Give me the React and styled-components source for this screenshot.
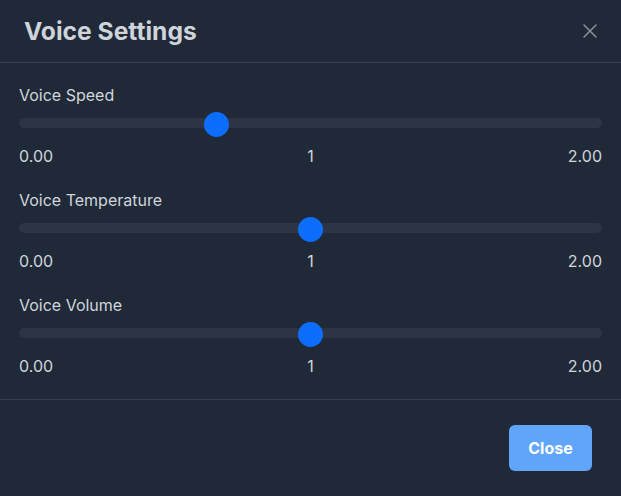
import React from 'react'
import styled, { createGlobalStyle } from 'styled-components'

const Global = createGlobalStyle`
    html, body {
        margin: 0;
        padding: 0;
        background: #1f2937;
    }
    body {
        font-family: Inter, "Noto Sans", sans-serif;
    }
`

const Modal = styled.div`
    width: 621px;
    height: 496px;
    background-color: #1f2937;
    color: #d1d5db;
    display: flex;
    flex-direction: column;
`

const Header = styled.div`
    height: 62px;
    display: flex;
    align-items: center;
    justify-content: space-between;
    padding: 0 24px 0 24px;
    border-bottom: 1px solid #364152;
`

const Title = styled.h2`
    margin: 0;
    font-size: 24.6px;
    font-weight: 700;
    color: #cfd3da;
`

const CloseX = styled.button`
    background: none;
    border: 0;
    padding: 0;
    width: 14px;
    height: 14px;
    display: flex;
    align-items: center;
    justify-content: center;
    cursor: pointer;
`

const Body = styled.div`
    padding: 22px 19px 23px 19px;
    display: flex;
    flex-direction: column;
    gap: 24px;
    border-bottom: 1px solid #364152;
`

const Field = styled.div`
    display: flex;
    flex-direction: column;
`

const Label = styled.div`
    font-size: 16px;
    line-height: 20px;
    color: #d1d5db;
`

const SliderRow = styled.div`
    position: relative;
    height: 24px;
    margin-top: 6px;
    display: flex;
    align-items: center;
`

const Track = styled.div`
    width: 100%;
    height: 10px;
    border-radius: 5px;
    background-color: #2d3446;
`

const Thumb = styled.div`
    position: absolute;
    top: 50%;
    width: 25px;
    height: 25px;
    margin-left: -12.5px;
    margin-top: -11px;
    border-radius: 50%;
    background-color: #0d6efd;
`

const Scale = styled.div`
    margin-top: 11px;
    display: flex;
    justify-content: space-between;
    font-size: 16px;
    line-height: 20px;
    color: #d1d5db;
`

const Footer = styled.div`
    flex: 1;
    display: flex;
    justify-content: flex-end;
    align-items: center;
    padding: 0 29px;
`

const Button = styled.button`
    width: 83px;
    height: 46px;
    border: 0;
    border-radius: 6px;
    background-color: #60a5fa;
    color: #ffffff;
    font-family: Inter, "Noto Sans", sans-serif;
    font-size: 16px;
    font-weight: 700;
    cursor: pointer;
`

const fields = [
    { label: 'Voice Speed', pos: 197 },
    { label: 'Voice Temperature', pos: 291 },
    { label: 'Voice Volume', pos: 291 },
]

const App = () => {
    return (
        <>
            <Global />
            <Modal>
                <Header>
                    <Title>Voice Settings</Title>
                    <CloseX aria-label="close">
                        <svg width="14" height="14" viewBox="0 0 14 14">
                            <path d="M1 1 L13 13 M13 1 L1 13" stroke="#8b919c" strokeWidth="1.5" strokeLinecap="round" />
                        </svg>
                    </CloseX>
                </Header>
                <Body>
                    {fields.map((f) => (
                        <Field key={f.label}>
                            <Label>{f.label}</Label>
                            <SliderRow>
                                <Track />
                                <Thumb style={{ left: f.pos + 'px' }} />
                            </SliderRow>
                            <Scale>
                                <span>0.00</span>
                                <span>1</span>
                                <span>2.00</span>
                            </Scale>
                        </Field>
                    ))}
                </Body>
                <Footer>
                    <Button>Close</Button>
                </Footer>
            </Modal>
        </>
    )
}

export default App
